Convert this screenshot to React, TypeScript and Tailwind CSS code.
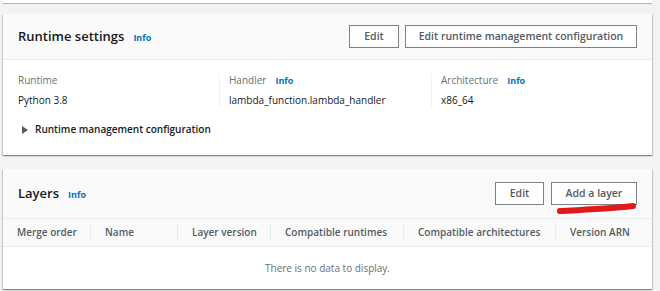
const font = { fontFamily: '"Open Sans", "Liberation Sans", sans-serif' };

function Info() {
  return <span className="text-[9px] font-bold text-[#0073bb]">Info</span>;
}

function Btn({ children, className = "" }: { children: React.ReactNode; className?: string }) {
  return (
    <button
      type="button"
      className={`h-[23px] border border-[#7d8384] bg-white text-[10.5px] font-semibold text-[#545b64] ${className}`}
    >
      {children}
    </button>
  );
}

function Field({ label, value, info }: { label: string; value: string; info?: boolean }) {
  return (
    <div className="flex flex-col gap-[5px]">
      <div className="flex items-center gap-[9px] text-[10px] text-[#687078]">
        {label}
        {info && <Info />}
      </div>
      <div className="text-[10px] text-[#16191f]">{value}</div>
    </div>
  );
}

const COLS = [
  { label: "Merge order", w: "w-[88px]" },
  { label: "Name", w: "w-[87px]" },
  { label: "Layer version", w: "w-[93px]" },
  { label: "Compatible runtimes", w: "w-[133px]" },
  { label: "Compatible architectures", w: "w-[152px]" },
  { label: "Version ARN", w: "flex-1" },
];

const card =
  "ml-[3px] w-[649px] bg-white shadow-[0_1px_1px_rgba(0,28,36,0.3),1px_1px_1px_rgba(0,28,36,0.15),-1px_1px_1px_rgba(0,28,36,0.15)]";

export default function App() {
  return (
    <div className="h-[291px] w-[660px] overflow-hidden bg-[#f2f3f3] text-[#16191f]" style={font}>
      <div className="ml-[3px] h-[3px] w-[649px] bg-white shadow-[0_1px_1px_rgba(0,28,36,0.3)]" />

      <section className={`${card} mt-[11px]`}>
        <div className="flex h-[46px] items-center border-b border-[#eaeded] bg-[#fafafa] px-[15px]">
          <h2 className="text-[13px] font-semibold">Runtime settings</h2>
          <span className="-mt-[3px] ml-[9px] leading-none">
            <Info />
          </span>
          <div className="ml-auto flex gap-[6px]">
            <Btn className="w-[50px]">Edit</Btn>
            <Btn className="w-[232px]">Edit runtime management configuration</Btn>
          </div>
        </div>
        <div className="h-[95px] pt-[13px]">
          <div className="grid grid-cols-[217px_212px_1fr]">
            <div className="border-r border-[#f2f3f3] pl-[15px]">
              <Field label="Runtime" value="Python 3.8" />
            </div>
            <div className="border-r border-[#f2f3f3] pl-[9px]">
              <Field label="Handler" value="lambda_function.lambda_handler" info />
            </div>
            <div className="pl-[9px]">
              <Field label="Architecture" value="x86_64" info />
            </div>
          </div>
          <div className="mt-[14px] flex items-center gap-[6px] pl-[18px] text-[10px] font-semibold text-[#16191f]">
            <svg width="8" height="8" viewBox="0 0 8 8">
              <path d="M1 0 L7 4 L1 8 Z" fill="#545b64" />
            </svg>
            Runtime management configuration
          </div>
        </div>
      </section>

      <section className={`${card} mt-[14px]`}>
        <div className="relative flex h-[49px] items-center bg-[#fafafa] px-[15px]">
          <h2 className="text-[13px] font-semibold">Layers</h2>
          <span className="-mt-[3px] ml-[9px] leading-none">
            <Info />
          </span>
          <div className="ml-auto flex gap-[7px]">
            <Btn className="w-[49px]">Edit</Btn>
            <Btn className="w-[86px]">Add a layer</Btn>
          </div>
          <svg
            className="absolute left-[552px] top-[32px]"
            width="84"
            height="14"
            viewBox="0 0 84 14"
          >
            <path
              d="M5 10 C 25 9, 50 8, 78 5"
              stroke="#e0191b"
              strokeWidth="6"
              strokeLinecap="round"
              fill="none"
            />
          </svg>
        </div>
        <div className="flex h-[29px] items-center border-y border-[#eaeded] bg-[#fafafa]">
          {COLS.map((c, i) => (
            <div
              key={c.label}
              className={`${c.w} flex h-[17px] items-center pl-[14px] text-[10px] font-semibold text-[#545b64] ${
                i < COLS.length - 1 ? "border-r border-[#eaeded]" : ""
              }`}
            >
              {c.label}
            </div>
          ))}
        </div>
        <div className="flex h-[42px] items-center justify-center text-[10px] text-[#687078]">
          There is no data to display.
        </div>
      </section>
    </div>
  );
}
